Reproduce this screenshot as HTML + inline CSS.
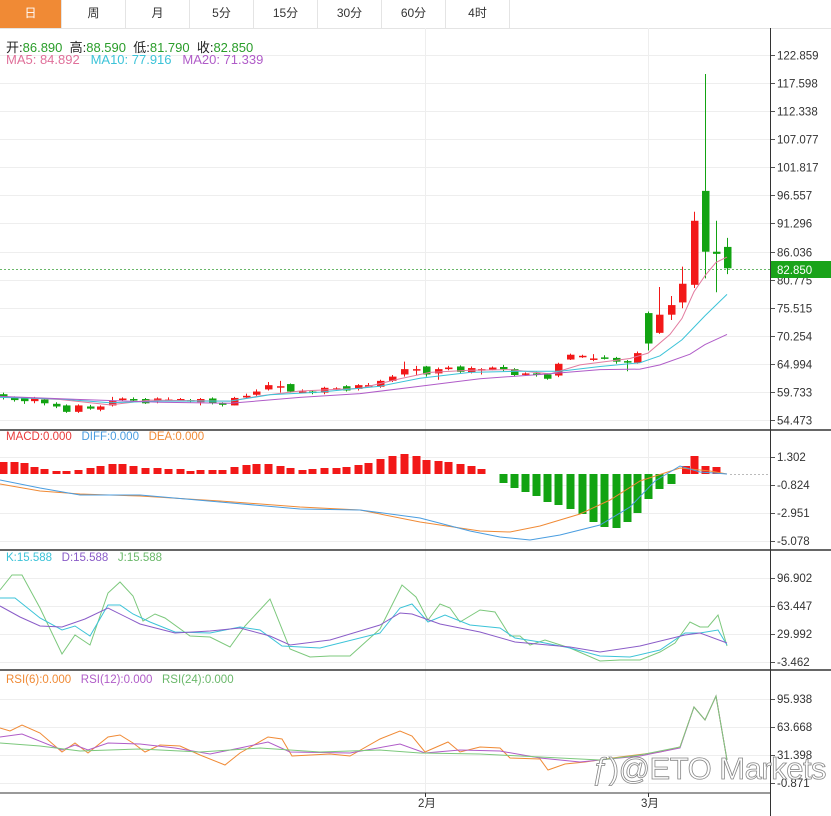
<!DOCTYPE html>
<html><head><meta charset="utf-8"><style>
html,body{margin:0;padding:0;background:#fff;width:831px;height:816px;overflow:hidden;font-family:"Liberation Sans","Noto Sans CJK SC",sans-serif}
#tabs{position:absolute;left:0;top:0;width:831px;height:28px;border-bottom:1px solid #e4e4e4;display:flex}
#tabs div{width:64px;height:28px;line-height:27px;text-align:center;font-size:12px;color:#333;border-right:1px solid #e4e4e4;box-sizing:border-box}
#tabs div.on{background:#f08a35;color:#fff;width:62px}
.lbl{position:absolute;font-size:12px;white-space:nowrap}
svg{position:absolute;left:0;top:0}
</style></head><body>
<div id="tabs"><div class="on">日</div><div>周</div><div>月</div><div>5分</div><div>15分</div><div>30分</div><div>60分</div><div>4时</div></div>
<svg id="s" width="831" height="816" xmlns="http://www.w3.org/2000/svg" font-family="Liberation Sans, Noto Sans CJK SC, sans-serif"></svg>
<div class="lbl" style="left:6px;top:37px;color:#222;font-size:13px">开:<span style="color:#2a9d2a">86.890</span>&nbsp; 高:<span style="color:#2a9d2a">88.590</span>&nbsp; 低:<span style="color:#2a9d2a">81.790</span>&nbsp; 收:<span style="color:#2a9d2a">82.850</span></div>
<div class="lbl" style="left:6px;top:52px;font-size:13px"><span style="color:#e0709a">MA5: 84.892</span>&nbsp;&nbsp; <span style="color:#3cc3d8">MA10: 77.916</span>&nbsp;&nbsp; <span style="color:#b05cc8">MA20: 71.339</span></div>
<div class="lbl" style="left:6px;top:431px;font-size:11.5px"><span style="color:#e83a3a">MACD:0.000</span>&nbsp;&nbsp; <span style="color:#4a9de0">DIFF:0.000</span>&nbsp;&nbsp; <span style="color:#f08a35">DEA:0.000</span></div>
<div class="lbl" style="left:6px;top:552px;font-size:11.5px"><span style="color:#3cc3d8">K:15.588</span>&nbsp;&nbsp; <span style="color:#8a5cc8">D:15.588</span>&nbsp;&nbsp; <span style="color:#6ab86a">J:15.588</span></div>
<div class="lbl" style="left:6px;top:674px;font-size:11.5px"><span style="color:#f08a35">RSI(6):0.000</span>&nbsp;&nbsp; <span style="color:#b05cc8">RSI(12):0.000</span>&nbsp;&nbsp; <span style="color:#6ab86a">RSI(24):0.000</span></div>
<div class="lbl" style="left:592px;top:751px;font-size:31px;color:rgba(255,255,255,0.85);-webkit-text-stroke:0.8px #888;letter-spacing:-0.5px">ƒ)@ETO Markets</div>
<script>
var s=document.getElementById('s'),h='';
function L(x1,y1,x2,y2,c,w){h+='<line x1="'+x1+'" y1="'+y1+'" x2="'+x2+'" y2="'+y2+'" stroke="'+c+'" stroke-width="'+(w||1)+'"/>';}
function T(x,y,t,c){h+='<text x="'+x+'" y="'+y+'" font-size="11.5" fill="'+(c||'#333')+'">'+t+'</text>';}
function P(pts,c){h+='<polyline fill="none" stroke="'+c+'" stroke-width="1" points="'+pts.map(function(p){return p[0]+','+p[1]}).join(' ')+'"/>';}
var main=[122.859,117.598,112.338,107.077,101.817,96.557,91.296,86.036,80.775,75.515,70.254,64.994,59.733,54.473];
function yp(p){return 55+(122.859-p)*5.337;}
main.forEach(function(v){var y=Math.round(yp(v))+.5;L(0,y,770,y,'#eeeeee');L(770,y,775,y,'#555');T(777,y+4,v.toFixed(3));});
[[457,'1.302'],[485,'-0.824'],[513,'-2.951'],[541,'-5.078']].forEach(function(a){L(0,a[0]+.5,770,a[0]+.5,'#eeeeee');L(770,a[0]+.5,775,a[0]+.5,'#555');T(777,a[0]+4,a[1]);});
[[578,'96.902'],[606,'63.447'],[634,'29.992'],[662,'-3.462']].forEach(function(a){L(0,a[0]+.5,770,a[0]+.5,'#eeeeee');L(770,a[0]+.5,775,a[0]+.5,'#555');T(777,a[0]+4,a[1]);});
[[699,'95.938'],[727,'63.668'],[755,'31.398'],[783,'-0.871']].forEach(function(a){L(0,a[0]+.5,770,a[0]+.5,'#eeeeee');L(770,a[0]+.5,775,a[0]+.5,'#555');T(777,a[0]+4,a[1]);});
L(425.5,28,425.5,793,'#eeeeee');L(648.5,28,648.5,793,'#eeeeee');
L(0,430,831,430,'#333',1.5);L(0,550,831,550,'#333',1.5);L(0,670,831,670,'#333',1.5);L(0,793,770,793,'#333',1);
L(770.5,28,770.5,816,'#333',1);
L(425.5,793,425.5,797,'#333');L(648.5,793,648.5,797,'#333');
T(418,807,'2月');T(641,807,'3月');
for(var x=0;x<770;x+=4)L(x,269.5,x+2,269.5,'#6ab86a');
h+='<rect x="771" y="261" width="60" height="17" fill="#1aa31a"/>';T(777,274,'82.850','#fff');
var c=[[3,59.3,58.7,59.6,58.3],[14,58.6,58.2,58.9,57.9],[24,58.5,58.0,58.7,57.5],[34,58.0,58.5,58.8,57.6],[44,58.3,57.6,58.4,57.2],[56,57.5,57.0,57.8,56.7],[66,57.2,56.0,57.4,55.8],[78,56.0,57.2,57.4,55.8],[90,57.0,56.6,57.3,56.4],[100,56.4,57.0,57.2,56.1],[112,57.2,58.0,58.8,57.0],[122,58.2,58.5,58.7,58.0],[133,58.4,58.3,58.7,58.0],[145,58.4,57.6,58.6,57.5],[157,58.0,58.5,58.7,57.6],[168,58.3,58.3,58.7,58.0],[180,58.3,58.4,58.6,58.0],[190,58.2,58.0,58.4,57.8],[200,57.8,58.4,58.6,57.2],[212,58.5,57.6,58.7,57.4],[222,57.6,57.4,57.8,57.0],[234,57.2,58.6,58.8,57.2],[246,58.7,59.0,59.4,58.6],[256,59.2,59.8,60.2,59.0],[268,60.2,61.0,61.6,60.0],[280,60.8,60.8,61.8,59.6],[290,61.2,59.8,61.3,59.6],[302,59.8,59.8,60.2,59.5],[312,59.8,59.6,60.0,59.3],[324,59.6,60.5,60.7,59.3],[336,60.2,60.4,60.6,60.0],[346,60.8,60.0,61.0,59.8],[358,60.3,61.0,61.2,60.0],[368,60.8,61.0,61.4,60.6],[380,60.7,61.8,62.0,60.5],[392,61.8,62.6,62.9,61.6],[404,63.0,64.0,65.4,62.6],[416,64.0,64.0,64.6,62.8],[426,64.5,63.0,64.6,62.6],[438,63.2,64.0,64.3,62.0],[448,64.0,64.3,64.6,63.8],[460,64.5,63.5,64.7,63.3],[471,63.4,64.2,64.5,63.2],[481,64.0,64.0,64.2,63.0],[492,63.9,64.3,64.5,63.8],[503,64.4,64.0,64.8,63.6],[514,64.0,62.9,64.2,62.6],[525,63.0,63.2,63.4,62.8],[536,63.2,63.0,63.5,62.6],[547,63.0,62.2,63.2,62.0],[558,62.8,65.0,65.2,62.5],[570,65.8,66.7,66.9,65.7],[582,66.4,66.5,66.7,66.1],[593,66.0,66.0,66.8,65.5],[604,66.2,66.1,66.6,65.8],[616,66.1,65.4,66.3,65.0],[627,65.5,65.4,65.7,63.6],[637,65.2,67.0,67.3,65.0],[648,74.5,68.8,74.8,67.5],[659,70.8,74.2,79.4,70.6],[671,74.2,76.0,77.7,73.2],[682,76.5,80.0,83.2,75.4],[694,79.8,91.8,93.5,79.2],[705,97.4,86.0,119.3,81.0],[716,86.0,85.6,91.8,78.4],[727,86.9,82.9,88.6,81.8]];
c.forEach(function(d){var x=d[0],col=d[2]>=d[1]?'#f21818':'#12a312';
 L(x+.5,yp(d[3]),x+.5,yp(d[4]),col,1);
 var t=yp(Math.max(d[1],d[2])),b=yp(Math.min(d[1],d[2]));if(b-t<1.5)b=t+1.5;
 h+='<rect x="'+(x-3)+'" y="'+t+'" width="7.5" height="'+(b-t)+'" fill="'+col+'"/>';});
function MA(pts,c){P(pts.map(function(p){return [p[0],yp(p[1])]}),c);}
MA([[0,58.8],[60,58.3],[110,57.3],[150,58.2],[230,58.0],[260,59.0],[300,59.9],[360,60.4],[400,62.2],[430,63.4],[470,63.8],[510,63.9],[550,63.1],[580,64.8],[630,66.0],[648,67.0],[670,70.5],[682,73.5],[694,78.5],[705,81.5],[716,84],[727,85]],'#e27b9f');
MA([[0,58.7],[60,58.4],[110,57.7],[160,58.0],[230,58.0],[270,59.2],[320,59.7],[380,60.8],[420,62.3],[470,63.4],[520,63.6],[560,63.6],[600,64.5],[640,65.2],[660,66.5],[682,69.5],[705,74],[727,78]],'#3cc3d8');
MA([[0,58.9],[80,58.3],[160,57.8],[230,57.6],[300,58.7],[360,59.4],[420,60.8],[480,62.2],[540,63.0],[600,63.9],[640,64.0],[660,64.8],[690,66.8],[705,68.6],[727,70.5]],'#b05cc8');
var z=474,bars=[[3,462],[14,462],[24,463],[34,467],[44,469],[56,471],[66,471],[78,470],[90,468],[100,466],[112,464],[122,464],[133,466],[145,468],[157,468],[168,469],[180,469],[190,471],[200,470],[212,470],[222,470],[234,467],[246,465],[256,464],[268,464],[280,466],[290,468],[302,470],[312,469],[324,468],[336,468],[346,467],[358,465],[368,463],[380,459],[392,456],[404,454],[416,456],[426,460],[438,461],[448,462],[460,464],[471,466],[481,469],[503,483],[514,488],[525,492],[536,496],[547,502],[558,505],[570,509],[582,514],[593,522],[604,527],[616,528],[627,522],[637,513],[648,499],[659,489],[671,484],[694,456],[705,466],[716,467]];
bars.forEach(function(b){var col=b[1]<z?'#f21818':'#12a312',t=Math.min(b[1],z),hh=Math.abs(b[1]-z);if(hh<1.5)hh=1.5;
 h+='<rect x="'+(b[0]-3.5)+'" y="'+t+'" width="8" height="'+hh+'" fill="'+col+'"/>';});
h+='<rect x="682" y="466" width="8" height="8" fill="#f21818"/>';
for(var x=730;x<770;x+=4)L(x,474.5,x+2,474.5,'#bbb');
P([[0,484],[40,491],[80,494],[140,496],[220,501],[300,507],[360,510],[420,522],[480,531],[510,532],[540,526],[580,514],[610,500],[640,481],[680,468],[710,471],[727,474]],'#f08a35');
P([[0,480],[40,488],[80,495],[140,495],[220,502],[300,509],[360,510],[420,518],[470,531],[500,537],[530,540],[560,535],[600,525],[630,507],[655,481],[680,466],[700,472],[727,474]],'#4a9de0');
P([[0,590],[12,575],[22,575],[40,608],[62,654],[75,635],[90,645],[108,593],[120,582],[133,596],[143,621],[155,614],[165,618],[190,636],[210,637],[230,647],[245,626],[270,599],[290,649],[310,657],[330,656],[350,656],[380,629],[402,585],[416,597],[428,620],[440,604],[450,608],[460,622],[480,610],[495,612],[510,636],[520,636],[530,645],[545,640],[570,648],[600,661],[620,660],[640,660],[660,652],[675,643],[690,622],[700,627],[708,627],[718,615],[727,646]],'#7cc87c');
P([[0,598],[15,598],[40,618],[62,630],[75,626],[90,636],[108,605],[120,605],[133,614],[150,622],[175,632],[210,633],[240,627],[260,630],[282,646],[320,648],[380,633],[400,608],[412,604],[428,622],[445,615],[470,625],[500,628],[515,638],[540,642],[570,648],[600,656],[630,657],[660,650],[685,633],[700,633],[718,630],[727,645]],'#3cc3d8');
P([[0,606],[20,617],[40,626],[62,627],[85,619],[108,608],[140,624],[175,633],[210,631],[240,628],[270,636],[290,645],[330,640],[380,625],[400,613],[412,614],[440,624],[480,632],[515,642],[570,647],[600,652],[640,646],[685,635],[700,633],[727,643]],'#8a5cc8');
P([[0,728],[10,731],[22,725],[40,733],[62,752],[75,743],[88,753],[108,737],[120,735],[133,743],[145,752],[160,745],[180,746],[200,755],[225,765],[240,753],[268,737],[282,739],[292,756],[330,754],[350,756],[380,739],[400,731],[412,736],[425,752],[448,742],[460,752],[480,747],[500,748],[510,758],[540,759],[548,770],[565,764],[585,762],[620,757],[660,752],[680,747],[694,707],[705,720],[716,696],[727,760]],'#f08a35');
P([[0,737],[22,734],[62,750],[75,745],[88,750],[108,743],[140,744],[175,748],[210,754],[240,748],[268,742],[290,752],[350,753],[400,744],[425,753],[460,750],[500,751],[540,758],[580,762],[640,756],[680,748],[694,707],[705,720],[716,696],[727,760]],'#b05cc8');
P([[0,743],[40,746],[80,751],[140,749],[200,752],[260,748],[320,752],[380,750],[420,753],[480,754],[540,757],[600,760],[640,755],[680,747],[694,707],[705,720],[716,696],[727,760]],'#7cc87c');
s.innerHTML=h;
</script>
</body></html>
